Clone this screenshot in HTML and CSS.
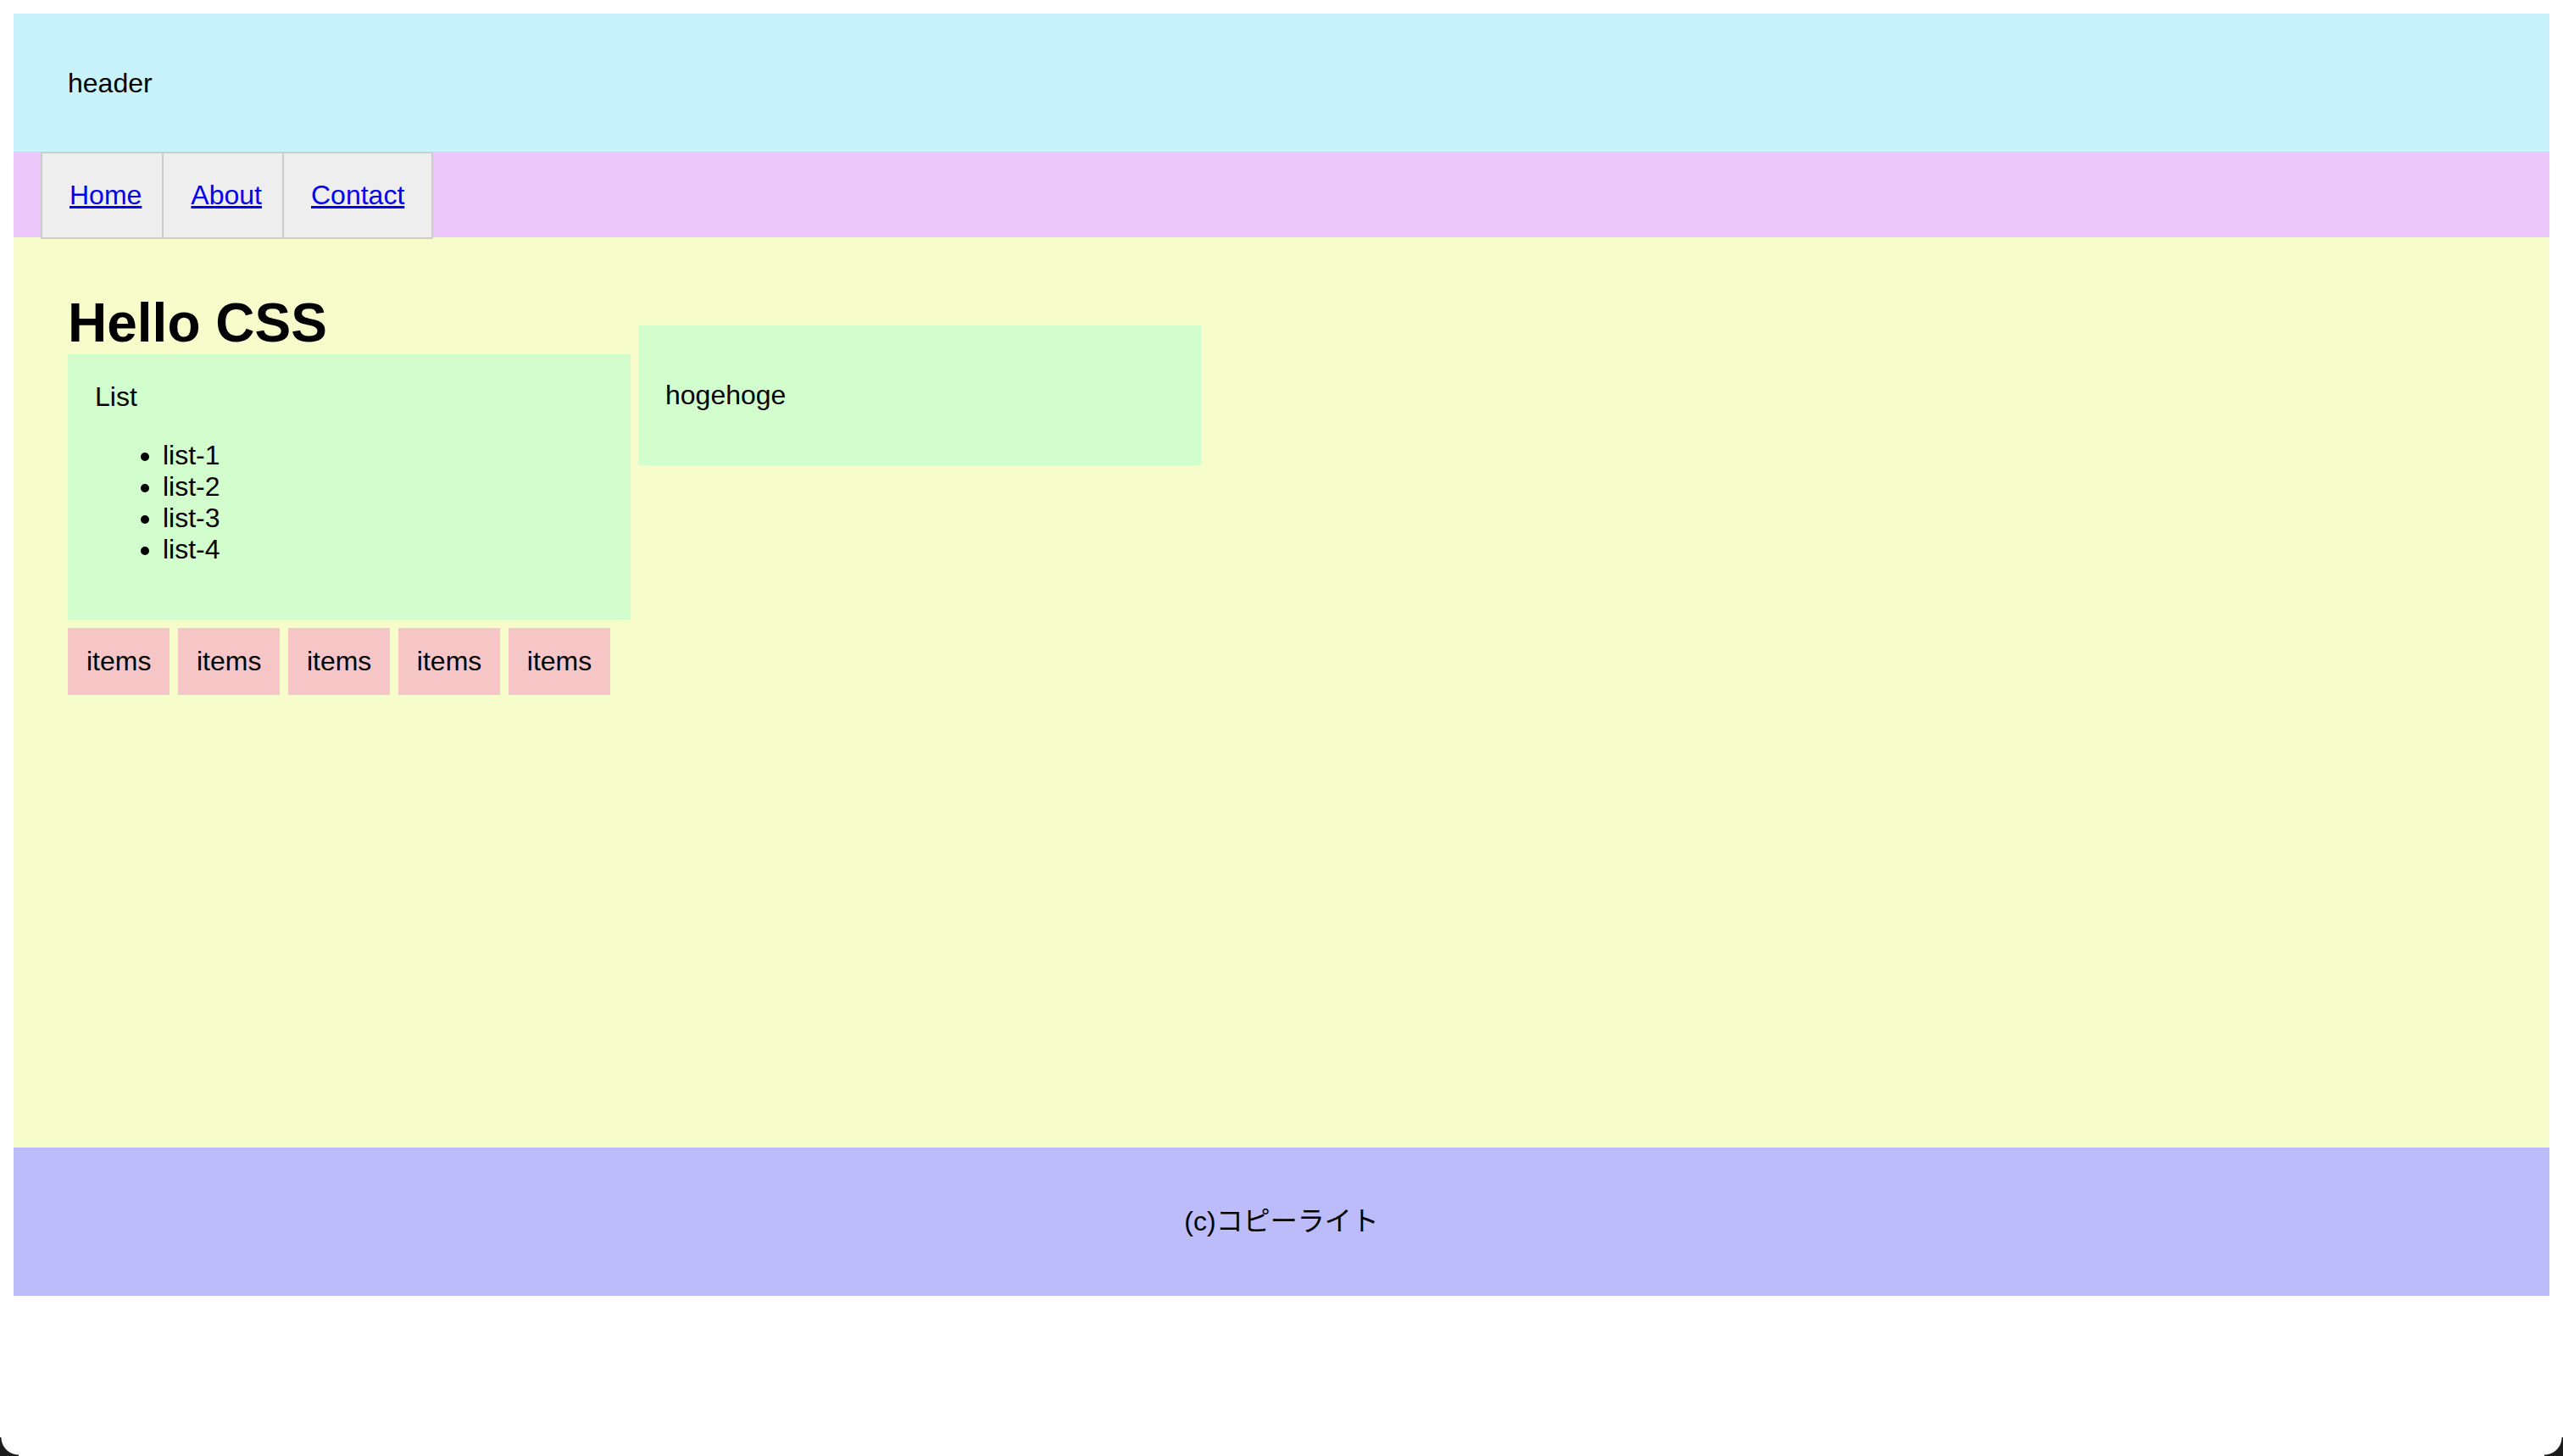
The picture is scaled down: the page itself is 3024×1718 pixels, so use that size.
FILE: index.html
```html
<!DOCTYPE html>
<html lang="ja">
<head>
<meta charset="utf-8">
<title>Hello CSS</title>
<link rel="stylesheet" href="styles.css">
</head>
<body>
<header class="site-header">header</header>
<nav class="site-nav">
  <ul class="nav-list">
    <li class="nav-item"><a class="nav-link" href="#">Home</a></li>
    <li class="nav-item"><a class="nav-link" href="#">About</a></li>
    <li class="nav-item"><a class="nav-link" href="#">Contact</a></li>
  </ul>
</nav>
<main class="site-main">
  <div class="content">
    <div class="col-left">
      <h1 class="title">Hello CSS</h1>
      <div class="box list-box">
        <div class="box-label">List</div>
        <ul class="list">
          <li>list-1</li>
          <li>list-2</li>
          <li>list-3</li>
          <li>list-4</li>
        </ul>
      </div>
      <div class="items">
        <div class="item">items</div>
        <div class="item">items</div>
        <div class="item">items</div>
        <div class="item">items</div>
        <div class="item">items</div>
      </div>
    </div>
    <div class="col-right">
      <div class="box hoge-box">
        <p class="hoge-text">hogehoge</p>
      </div>
    </div>
  </div>
</main>
<footer class="site-footer">(c)コピーライト</footer>
<div class="corner corner-left"></div>
<div class="corner corner-right"></div>
</body>
</html>
```
FILE: styles.css
```css
html {
  background: #ffffff;
}

body {
  margin: 16px;
  font-family: "Liberation Sans", "Noto Sans CJK JP", sans-serif;
  font-size: 32px;
  line-height: normal;
  color: #000000;
}

.site-header {
  background: #c8f2fc;
  padding: 64px;
  height: 165px;
  box-sizing: border-box;
}

.site-nav {
  background: #ecc8fa;
  height: 101px;
}

.nav-list {
  display: flex;
  list-style: none;
  margin: -2px 0 0 32px;
  padding: 0;
}

.nav-item {
  background: #eeeeee;
  border: 2px solid #cccccc;
  padding: 31px 24px 31px 32px;
}

.nav-item + .nav-item {
  margin-left: -2px;
}

.nav-item:last-child {
  padding-right: 32px;
}

.nav-link {
  color: #0000ee;
  text-decoration: underline;
}

.site-main {
  background: #f7fdca;
  height: 1074px;
  box-sizing: border-box;
  padding: 64px;
}

.content {
  display: flex;
  align-items: flex-start;
  gap: 9px;
}

.col-left {
  width: 664px;
}

.title {
  margin: 0;
  font-size: 64px;
  font-weight: bold;
  line-height: normal;
}

.box {
  background: #d2fdcd;
  padding: 32px;
  width: 600px;
}

.list {
  margin: 32px 0;
  padding-left: 80px;
}

.items {
  display: flex;
  gap: 9.5px;
  margin-top: 10px;
}

.item {
  background: #f6c6c6;
  padding: 21px 22px;
}

.col-right {
  margin-top: 40px;
}

.hoge-text {
  margin: 32px 0;
}

.site-footer {
  background: #bcbcfa;
  text-align: center;
  padding: 64px;
  line-height: 47px;
}

.corner {
  position: fixed;
  bottom: 0;
  width: 22px;
  height: 22px;
}

.corner-left {
  left: 0;
  background: radial-gradient(circle at 100% 0, transparent 20px, #1c1c1c 21px);
}

.corner-right {
  right: 0;
  background: radial-gradient(circle at 0 0, transparent 20px, #1c1c1c 21px);
}
```
